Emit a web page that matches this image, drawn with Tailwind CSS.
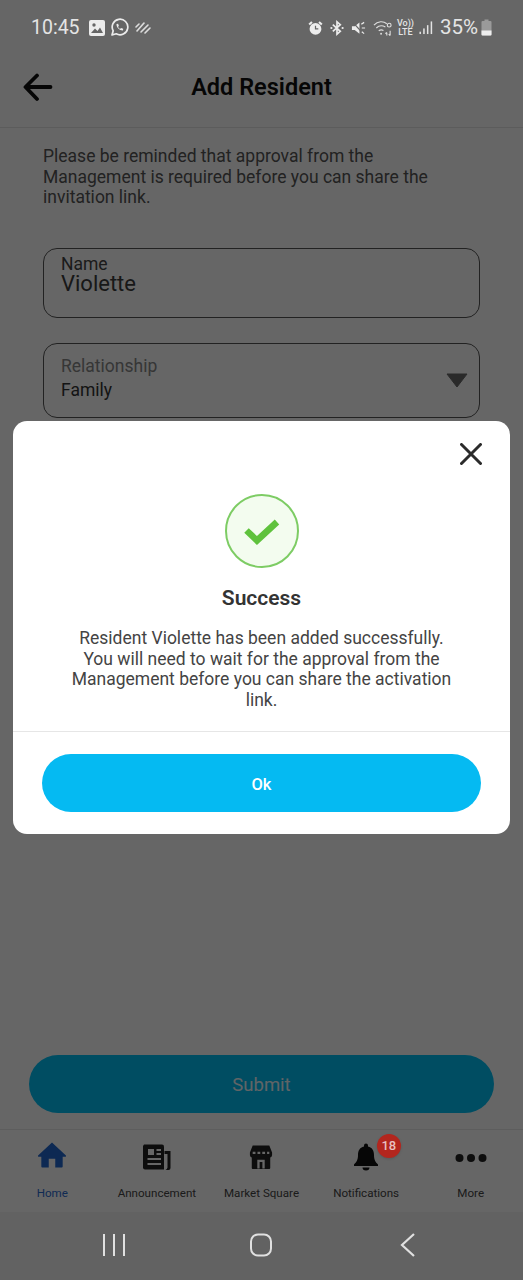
<!DOCTYPE html>
<html lang="en">
  <head>
    <meta charset="UTF-8" />
    <meta name="viewport" content="width=device-width, initial-scale=1.0" />
    <title>Add Resident</title>
    <script src="https://cdn.jsdelivr.net/npm/@tailwindcss/browser@4"></script>
  </head>
  <body class="bg-white font-['Roboto',sans-serif]">
    <div class="relative flex flex-col w-[523px] h-[1280px] overflow-hidden bg-white">
      <!-- Status bar -->
      <div class="relative z-20 flex items-center justify-between h-[55px] pl-[31px] pr-[31px] text-[#e4e4e4]">
        <div class="flex items-center">
          <span class="text-[19.5px] leading-none">10:45</span>
          <svg class="ml-[9px]" width="16" height="16" viewBox="0 0 16 16"><rect width="16" height="16" rx="2" fill="#ececec"/><circle cx="5" cy="5" r="1.7" fill="#666"/><path d="M2 13 L6 8.5 L8.5 11 L11 7.5 L14 13Z" fill="#666"/></svg>
          <svg class="ml-[5px]" width="19" height="19" viewBox="0 0 19 19" fill="none"><path d="M2 17 L3.2 12.8 A7.8 7.8 0 1 1 6.2 15.8Z" stroke="#ececec" stroke-width="1.7" stroke-linejoin="round"/><path d="M6.5 6 C6.3 9.5 9.5 12.6 13 12.5 L13.2 10.8 L11 10 L10 10.9 C9 10.4 8.4 9.7 8 8.8 L8.9 7.9 L8.1 5.8Z" fill="#ececec"/></svg>
          <svg class="ml-[6px]" width="16" height="14" viewBox="0 0 16 14" stroke="#dcdcdc" stroke-width="1.6" stroke-linecap="round"><path d="M1 6 L4 3"/><path d="M2 10 L9 2"/><path d="M6 11 L13 4"/><path d="M10 12 L15 7"/></svg>
        </div>
        <div class="flex items-center">
          <svg width="15" height="16" viewBox="0 0 16 16" fill="#ececec"><circle cx="8" cy="9" r="6.3"/><path d="M0.5 3.5 L3.5 0.8 L5 2.4 L2 5Z M15.5 3.5 L12.5 0.8 L11 2.4 L14 5Z"/><path d="M8 5.5 V9 H11" stroke="#666" stroke-width="1.3" fill="none"/></svg>
          <svg class="ml-[7px]" width="14" height="16" viewBox="0 0 15 16" fill="none" stroke="#ececec" stroke-width="1.8"><path d="M3 4.5 L11 11.5 L7.5 14.5 V1.5 L11 4.5 L3 11.5"/><circle cx="1.5" cy="8" r="1.2" fill="#ececec" stroke="none"/><circle cx="13.5" cy="8" r="1.2" fill="#ececec" stroke="none"/></svg>
          <svg class="ml-[7px]" width="15" height="16" viewBox="0 0 16 16"><path d="M1 6 H4 L9 2 V14 L4 10 H1Z" fill="#ececec"/><path d="M2 2 L13 14" stroke="#666" stroke-width="1.4"/><path d="M11 4 L14 2 M11.5 8 H15 M11.5 12 L14 14" stroke="#ececec" stroke-width="1.3"/></svg>
          <svg class="ml-[7px]" width="20" height="18" viewBox="0 0 21 18" fill="none" stroke="#dedede" stroke-width="1.2"><path d="M1 6 C5 1.5 11 1.5 14.5 4.5"/><path d="M3.5 9 C6 6.5 10 6.3 13 8"/><path d="M6 12 C7.5 10.8 9.5 10.8 11 11.6"/><circle cx="8.5" cy="15" r="1" fill="#dedede" stroke="none"/><path d="M14.5 14 V17 M13 15 L14.5 13.5 M18 12 V17 M16.5 15.5 L18 17"/><circle cx="17" cy="6" r="2" /></svg>
          <div class="ml-[5px] flex flex-col items-center w-[15px] text-[9px] leading-[9px] font-medium text-[#e4e4e4]"><span>Vo))</span><span>LTE</span></div>
          <svg class="ml-[6px]" width="14" height="15" viewBox="0 0 15 15" fill="#e4e4e4"><rect x="0.5" y="12" width="1.6" height="2.5"/><rect x="4.5" y="8.5" width="1.6" height="6"/><rect x="8.5" y="5" width="1.6" height="9.5"/><rect x="12.5" y="1" width="1.6" height="13.5"/></svg>
          <span class="ml-[7px] text-[20.5px] leading-none">35%</span>
          <svg class="ml-[3px]" width="11" height="17" viewBox="0 0 11 17"><path d="M3.5 0.5 H7.5 V2 H9.5 A1 1 0 0 1 10.5 3 V15.5 A1 1 0 0 1 9.5 16.5 H1.5 A1 1 0 0 1 0.5 15.5 V3 A1 1 0 0 1 1.5 2 H3.5Z" fill="#9a9a9a"/><path d="M0.5 11.5 H10.5 V15.5 A1 1 0 0 1 9.5 16.5 H1.5 A1 1 0 0 1 0.5 15.5Z" fill="#eeeeee"/></svg>
        </div>
      </div>

      <!-- Header -->
      <header class="relative flex items-center justify-center h-[73px] pb-[6px] border-b border-[#e6e6e6]">
        <svg class="absolute left-[23px] top-[17px]" width="30" height="30" viewBox="0 0 30 30" fill="none" stroke="#111" stroke-width="3.8" stroke-linecap="round" stroke-linejoin="round"><path d="M27.5 15 H3 M14 3.5 L2.5 15 L14 27"/></svg>
        <h1 class="text-[23.5px] leading-none font-semibold text-[#111]">Add Resident</h1>
      </header>

      <!-- Form -->
      <main class="flex flex-col flex-1 min-h-0">
        <div class="flex-1 pt-[18px] px-[43px]">
          <p class="w-[392px] text-[17.5px] leading-[20.5px] text-[#555]">Please be reminded that approval from the Management is required before you can share the invitation link.</p>
          <div class="mt-[40px] h-[70px] border border-[#555] rounded-[14px] px-[17px] pt-[7px]">
            <div class="text-[17.5px] leading-[17px] text-[#444]">Name</div>
            <div class="text-[22px] leading-[21px] text-[#3c3c3c]">Violette</div>
          </div>
          <div class="relative mt-[25px] h-[75px] border border-[#555] rounded-[14px] px-[17px] pt-[12px]">
            <div class="text-[17.5px] leading-[21px] text-[#888]">Relationship</div>
            <div class="mt-[3px] text-[17.5px] leading-[21px] text-[#333]">Family</div>
            <svg class="absolute right-[11px] top-[29px]" width="22" height="15" viewBox="0 0 22 15"><path d="M1 1 H21 L11 14Z" fill="#6a6a6a" stroke="#6a6a6a" stroke-linejoin="round"/></svg>
          </div>
        </div>
        <div class="px-[29px] pb-[16px]">
          <button class="w-full h-[58px] pt-[3px] rounded-full bg-[#00c0f6] text-[18.5px] text-[#f0fbff]">Submit</button>
        </div>
      </main>

      <!-- Bottom tabs -->
      <nav class="grid grid-cols-5 h-[83px] border-t border-[#e8e8e8] text-[11.6px] text-[#444] bg-white">
        <div class="flex flex-col items-center pt-[12px] text-[#2a6bd0]">
          <svg width="30" height="26" viewBox="0 0 32 28"><path d="M16 0.5 L31 14.5 A1 1 0 0 1 30 16 H27.5 V26.5 A1 1 0 0 1 26.5 27.5 H19.5 V18 H12.5 V27.5 H5.5 A1 1 0 0 1 4.5 26.5 V16 H2 A1 1 0 0 1 1 14.5Z" fill="#2168cf"/></svg>
          <span class="mt-[18px] leading-[14px]">Home</span>
        </div>
        <div class="flex flex-col items-center pt-[13px]">
          <svg class="h-[28px]" width="30" height="28" viewBox="0 0 30 28"><path d="M2 1.5 H20 A2 2 0 0 1 22 3.5 V26.5 H3 A2 2 0 0 1 1 24.5 V3 Z" fill="#222"/><path d="M22.5 8 H28.5 V25 A2 2 0 0 1 26.5 27 H23.5 A3 3 0 0 0 25.5 24.5 V11 H22.5Z" fill="#222"/><rect x="6" y="6" width="6" height="6" fill="#fff"/><path d="M14.5 7 H19 M14.5 11 H19 M5.5 16 H19 M5.5 21 H19" stroke="#fff" stroke-width="2"/></svg>
          <span class="mt-[15px] leading-[14px] whitespace-nowrap">Announcement</span>
        </div>
        <div class="flex flex-col items-center pt-[13px]">
          <svg class="h-[28px]" width="24" height="28" viewBox="0 0 26 28"><path d="M4 1.5 H22 L25 9 V12 A3 3 0 0 1 23 14.5 V26 A1 1 0 0 1 22 27 H4 A1 1 0 0 1 3 26 V14.5 A3 3 0 0 1 1 12 V9Z" fill="#222"/><path d="M4 9.5 H22" stroke="#fff" stroke-width="2.4" stroke-dasharray="3 2.2"/><path d="M9 26.5 V17 H17 V26.5 H14.5 V19.5 H11.5 V26.5Z" fill="#fff"/></svg>
          <span class="mt-[15px] leading-[14px] whitespace-nowrap">Market Square</span>
        </div>
        <div class="relative flex flex-col items-center pt-[13px]">
          <svg class="h-[28px]" width="26" height="28" viewBox="0 0 26 28"><path d="M13 0.5 A2 2 0 0 1 15 2.5 V3.5 C19.5 4.5 21 8 21 12 C21 17 22.5 19 25 21.5 V23 H1 V21.5 C3.5 19 5 17 5 12 C5 8 6.5 4.5 11 3.5 V2.5 A2 2 0 0 1 13 0.5Z M9.5 24.5 H16.5 A3.5 3 0 0 1 9.5 24.5Z" fill="#111"/></svg>
          <span class="mt-[15px] leading-[14px]">Notifications</span>
          <span class="absolute z-20 left-[63px] top-[4px] flex items-center justify-center w-[24px] h-[24px] rounded-full bg-[#b3261e] text-[13px] font-medium text-[#e8c0c0] shadow">18</span>
        </div>
        <div class="flex flex-col items-center pt-[13px]">
          <svg class="h-[28px]" width="32" height="28" viewBox="0 0 32 28" fill="#222"><circle cx="4.5" cy="15" r="4"/><circle cx="16" cy="15" r="4"/><circle cx="27.5" cy="15" r="4"/></svg>
          <span class="mt-[15px] leading-[14px]">More</span>
        </div>
      </nav>

      <!-- Android nav keys -->
      <div class="relative z-20 flex items-center justify-center h-[68px] pr-[2px] pb-[2px] shrink-0 bg-[#626262]">
        <div class="grid grid-cols-3 w-[441px] justify-items-center">
          <svg width="24" height="24" viewBox="0 0 24 24" stroke="#e0e0e0" stroke-width="2"><path d="M2 1 V23 M12 1 V23 M22 1 V23"/></svg>
          <svg width="24" height="24" viewBox="0 0 24 24" fill="none" stroke="#e0e0e0" stroke-width="2"><rect x="2" y="1.5" width="20" height="21" rx="7"/></svg>
          <svg width="24" height="24" viewBox="0 0 24 24" fill="none" stroke="#e0e0e0" stroke-width="2.2"><path d="M18 1 L6 12 L18 23"/></svg>
        </div>
      </div>

      <!-- Dim layer -->
      <div class="absolute inset-0 z-10 bg-black/60"></div>

      <!-- Success dialog -->
      <div class="absolute z-20 left-[13px] top-[421px] w-[497px] h-[413px] bg-white rounded-[14px] text-center">
        <svg class="absolute right-[28px] top-[22px]" width="22" height="22" viewBox="0 0 22 22" stroke="#2b2b2b" stroke-width="3" stroke-linecap="round"><path d="M1.5 1.5 L20.5 20.5 M20.5 1.5 L1.5 20.5"/></svg>
        <div class="flex items-center justify-center mx-auto mt-[73px] w-[74px] h-[74px] rounded-full bg-[#f3fcef] border-2 border-[#7dcc64]">
          <svg width="36" height="28" viewBox="0 0 36 28" fill="none" stroke="#5fc23d" stroke-width="6.5" stroke-linejoin="miter"><path d="M2.5 13.5 L13 23.5 L33 5"/></svg>
        </div>
        <h2 class="mt-[18px] text-[21px] leading-[24px] font-semibold text-[#333]">Success</h2>
        <p class="mx-auto mt-[18px] w-[390px] text-[17.5px] leading-[20.6px] text-[#444]">Resident Violette has been added successfully. You will need to wait for the approval from the Management before you can share the activation link.</p>
        <div class="mt-[21px] border-t border-[#e6e6e6] px-[29px] pt-[22px]">
          <button class="w-full h-[58px] pt-[3px] rounded-full bg-[#05baf2] text-[16.5px] font-medium text-white">Ok</button>
        </div>
      </div>
    </div>
  </body>
</html>
